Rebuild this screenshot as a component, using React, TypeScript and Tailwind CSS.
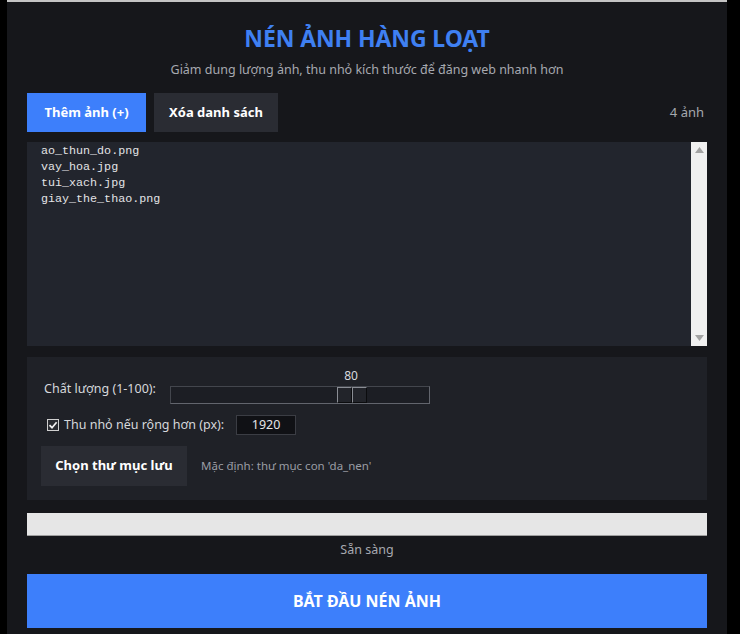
import React from "react";

const files = ["ao_thun_do.png", "vay_hoa.jpg", "tui_xach.jpg", "giay_the_thao.png"];

function Scrollbar() {
  return (
    <div className="flex w-[16px] flex-col items-center justify-between bg-[#f0f0f0] py-[5px]">
      <svg width="9" height="6" viewBox="0 0 9 6">
        <path d="M4.5 0 L9 6 L0 6 Z" fill="#a3a3a3" />
      </svg>
      <svg width="9" height="6" viewBox="0 0 9 6">
        <path d="M0 0 L9 0 L4.5 6 Z" fill="#a3a3a3" />
      </svg>
    </div>
  );
}

function QualitySlider({ value }: { value: number }) {
  const trackW = 260;
  const thumbW = 30;
  const left = 166;
  return (
    <div className="flex flex-col">
      <div className="relative h-[18px] w-[260px]">
        <span
          className="absolute top-0 text-[12px] leading-[16px] text-[#d8dade]"
          style={{ left: left + thumbW / 2, transform: "translateX(-50%)" }}
        >
          {value}
        </span>
      </div>
      <div
        className="relative h-[18px] border border-t-[#43464d] border-l-[#43464d] border-b-[#62656d] border-r-[#62656d] bg-[#1c1e24]"
        style={{ width: trackW }}
      >
        <div className="absolute top-[0px] flex h-[16px]" style={{ left }}>
          <div className="h-[16px] w-[15px] border border-t-[#8a8d94] border-l-[#8a8d94] border-b-[#0b0c0e] border-r-[#0b0c0e] bg-[#22242a]" />
          <div className="h-[16px] w-[15px] border border-t-[#8a8d94] border-l-[#8a8d94] border-b-[#0b0c0e] border-r-[#0b0c0e] bg-[#22242a]" />
        </div>
      </div>
    </div>
  );
}

export default function App() {
  const sans = { fontFamily: '"Noto Sans", "Open Sans", sans-serif' };
  return (
    <div className="flex h-[634px] w-[740px] overflow-hidden bg-black" style={sans}>
      <div className="ml-[7px] flex h-[634px] w-[720px] flex-col border-t-2 border-[#c4c4c4] bg-[#16171b] px-[20px]">
        <h1 className="mt-[21px] text-center text-[23px] font-bold leading-[30px] tracking-[-0.1px] text-[#3f80f2]">
          NÉN ẢNH HÀNG LOẠT
        </h1>
        <p className="mt-[8px] text-center text-[12.5px] leading-[18px] text-[#a7a9b0]">
          Giảm dung lượng ảnh, thu nhỏ kích thước để đăng web nhanh hơn
        </p>

        <div className="mt-[14px] flex h-[39px] items-center">
          <button className="h-[39px] w-[119px] bg-[#3d7ffb] text-[13px] font-bold text-white">
            Thêm ảnh (+)
          </button>
          <button className="ml-[8px] h-[39px] w-[124px] bg-[#2a2c33] text-[13px] font-bold text-white">
            Xóa danh sách
          </button>
          <span className="ml-auto mr-[3px] text-[13px] text-[#a5a8ae]">4 ảnh</span>
        </div>

        <div className="mt-[10px] flex h-[204px] bg-[#22252d]">
          <div
            className="flex-1 pl-[14px] pt-[1px] text-[11.7px] leading-[16px] text-[#e2e3e6]"
            style={{ fontFamily: '"Liberation Mono", "DejaVu Sans Mono", monospace' }}
          >
            {files.map((f) => (
              <div key={f}>{f}</div>
            ))}
          </div>
          <Scrollbar />
        </div>

        <div className="mt-[11px] flex h-[143px] flex-col bg-[#1f2127] pl-[14px] pt-[11px]">
          <div className="flex items-center">
            <span className="ml-[3px] w-[126px] pt-[6px] text-[12.5px] text-[#d6d8dc]">Chất lượng (1-100):</span>
            <QualitySlider value={80} />
          </div>

          <div className="mt-[11px] flex items-center">
            <div className="ml-[6px] flex h-[12px] w-[12px] items-center justify-center border border-[#d0d0d0] bg-[#2a2c31]">
              <svg width="10" height="10" viewBox="0 0 10 10">
                <path d="M1.5 5.2 L4 7.7 L8.6 2.3" fill="none" stroke="#f2f2f2" strokeWidth="1.7" />
              </svg>
            </div>
            <span className="ml-[5px] text-[12.5px] text-[#d6d8dc]">Thu nhỏ nếu rộng hơn (px):</span>
            <div className="ml-[12px] flex h-[20px] w-[60px] items-center justify-center border border-[#3b3d44] bg-[#101115] text-[12.5px] text-[#e4e5e8]">
              1920
            </div>
          </div>

          <div className="mt-[11px] flex items-center">
            <button className="h-[40px] w-[146px] bg-[#2a2c33] text-[13px] font-bold text-white">
              Chọn thư mục lưu
            </button>
            <span className="ml-[14px] text-[11.5px] text-[#9a9da4]">Mặc định: thư mục con 'da_nen'</span>
          </div>
        </div>

        <div className="mt-[13px] h-[23px] border-b border-[#9e9e9e] bg-[#e6e6e6]" />

        <p className="mt-[5px] text-center text-[12.5px] leading-[18px] text-[#a7a9b0]">Sẵn sàng</p>

        <button className="mt-[15px] h-[54px] w-full bg-[#3d7ffb] text-[16px] font-bold text-white">
          BẮT ĐẦU NÉN ẢNH
        </button>
      </div>
    </div>
  );
}
